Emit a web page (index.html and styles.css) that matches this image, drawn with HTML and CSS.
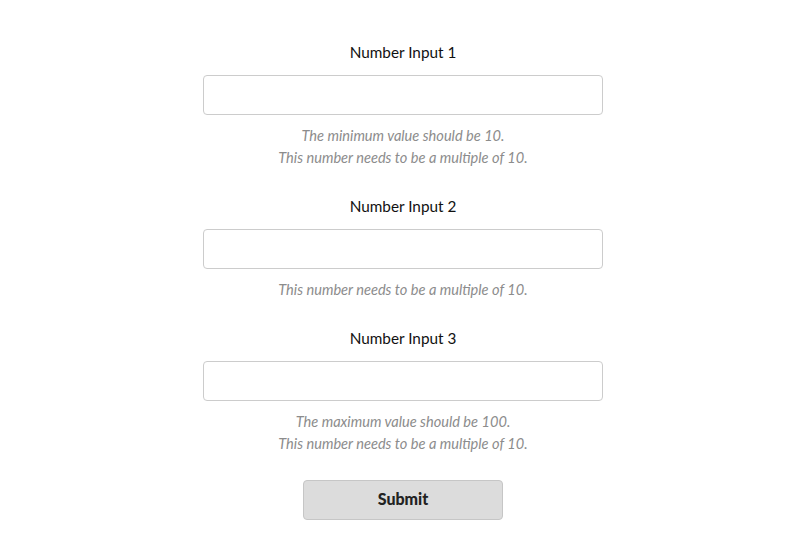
FILE: index.html
```html
<!DOCTYPE html>
<html>
<head>
<meta charset="utf-8">
<link rel="stylesheet" href="styles.css">
</head>
<body>
<form class="form">
  <div class="field">
    <label class="label">Number Input 1</label>
    <input class="input" type="text">
    <div class="hints">
      <p class="hint">The minimum value should be 10.</p>
      <p class="hint">This number needs to be a multiple of 10.</p>
    </div>
  </div>
  <div class="field">
    <label class="label">Number Input 2</label>
    <input class="input" type="text">
    <div class="hints">
      <p class="hint">This number needs to be a multiple of 10.</p>
    </div>
  </div>
  <div class="field">
    <label class="label">Number Input 3</label>
    <input class="input" type="text">
    <div class="hints">
      <p class="hint">The maximum value should be 100.</p>
      <p class="hint">This number needs to be a multiple of 10.</p>
    </div>
  </div>
  <button class="submit" type="button">Submit</button>
</form>
</body>
</html>
```
FILE: styles.css
```css
html, body {
  margin: 0;
  padding: 0;
  background: #fff;
}
body {
  font-family: Lato, "Open Sans", sans-serif;
  padding: 41px 6px 0 0;
}
.form {
  display: flex;
  flex-direction: column;
  align-items: center;
  gap: 26px;
}
.field {
  display: flex;
  flex-direction: column;
  align-items: center;
  width: 400px;
}
.label {
  font-size: 15.3px;
  line-height: 22px;
  color: #111;
  margin-bottom: 12px;
}
.input {
  box-sizing: border-box;
  width: 400px;
  height: 40px;
  border: 1px solid #cccccc;
  border-radius: 4px;
  background: #fff;
  margin: 0;
}
.hints {
  margin-top: 10px;
  display: flex;
  flex-direction: column;
  align-items: center;
}
.hint {
  margin: 0;
  font-size: 14.6px;
  line-height: 22px;
  font-style: italic;
  color: #8c8c8c;
}
.submit {
  box-sizing: border-box;
  width: 200px;
  height: 40px;
  margin-top: -1px;
  padding: 0 0 3px;
  border: 1px solid #c6c6c6;
  border-radius: 4px;
  background: #dcdcdc;
  font-family: Lato, sans-serif;
  font-weight: 900;
  font-size: 16px;
  color: #222;
}
```
